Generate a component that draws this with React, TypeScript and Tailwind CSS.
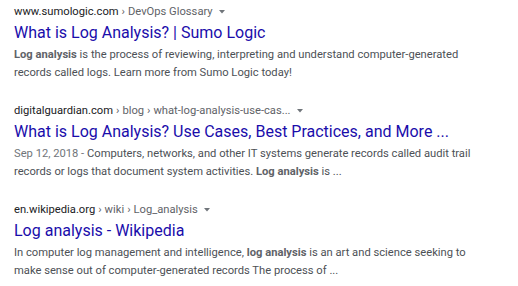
import React from "react";

function Arrow() {
  return (
    <svg width="10" height="10" viewBox="0 0 10 10" className="ml-[4px] inline-block">
      <path d="M2 3 L8 3 L5 6.5 Z" fill="#70757a" />
    </svg>
  );
}

function Result({ url, title, children }: { url: React.ReactNode; title: string; children: React.ReactNode }) {
  return (
    <div className="flex flex-col">
      <div className="flex items-center h-[18px] text-[11.2px] text-[#202124] whitespace-nowrap">
        {url}
        <Arrow />
      </div>
      <div className="h-[23px] leading-[23px] text-[16px] text-[#1a0dab] whitespace-nowrap">{title}</div>
      <div className="mt-[2px] text-[11.2px] leading-[17.6px] text-[#4d5156] w-[480px]">{children}</div>
    </div>
  );
}

const sep = <span className="text-[#5f6368] px-[3px]">›</span>;

export default function App() {
  return (
    <div className="w-[518px] h-[286px] bg-white px-[14px] pt-[3px] flex flex-col gap-[21px]" style={{ fontFamily: "Roboto, Arial, sans-serif" }}>
      <Result url={<span>www.sumologic.com{sep}<span className="text-[#5f6368]">DevOps Glossary</span></span>} title="What is Log Analysis? | Sumo Logic">
        <b className="font-bold text-[#5f6368]">Log analysis</b> is the process of reviewing, interpreting and understand computer-generated records called logs. Learn more from Sumo Logic today!
      </Result>
      <Result url={<span>digitalguardian.com{sep}<span className="text-[#5f6368]">blog</span>{sep}<span className="text-[#5f6368]">what-log-analysis-use-cas...</span></span>} title="What is Log Analysis? Use Cases, Best Practices, and More ...">
        <span className="text-[#70757a]">Sep 12, 2018 - </span>Computers, networks, and other IT systems generate records called audit trail records or logs that document system activities. <b className="font-bold text-[#5f6368]">Log analysis</b> is ...
      </Result>
      <Result url={<span>en.wikipedia.org{sep}<span className="text-[#5f6368]">wiki</span>{sep}<span className="text-[#5f6368]">Log_analysis</span></span>} title="Log analysis - Wikipedia">
        In computer log management and intelligence, <b className="font-bold text-[#5f6368]">log analysis</b> is an art and science seeking to make sense out of computer-generated records The process of ...
      </Result>
    </div>
  );
}
